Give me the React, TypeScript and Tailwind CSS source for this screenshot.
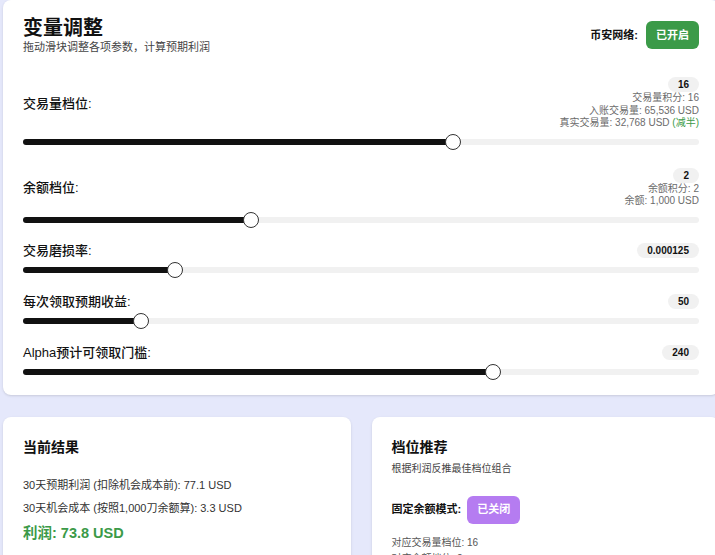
import React from "react";

type RowProps = {
  label: string;
  value: string;
  pct: number;
  extra?: React.ReactNode;
  className?: string;
};

function SliderRow({ label, value, pct, extra, className }: RowProps) {
  return (
    <div className={className}>
      <div className="flex items-center justify-between">
        <div className="text-[13px] font-medium leading-[15px] text-[#111]">{label}</div>
        <div className="flex flex-col items-end">
          <span className="h-[15px] rounded-full bg-[#f1f1f1] px-[10px] text-[10px] font-bold leading-[15px] text-[#111]">
            {value}
          </span>
          {extra && <div className="text-right text-[10px] leading-[12.5px] text-[#6b6b6b]">{extra}</div>}
        </div>
      </div>
      <div className="mt-1 flex h-4 items-center">
        <div className="relative h-[6px] w-full rounded-full bg-[#f1f1f1]">
          <div className="h-[6px] rounded-full bg-[#111]" style={{ width: `${pct}%` }} />
          <div
            className="absolute top-[-5px] h-4 w-4 -translate-x-1/2 rounded-full border-[1.5px] border-[#333] bg-white"
            style={{ left: `${pct}%` }}
          />
        </div>
      </div>
    </div>
  );
}

export default function App() {
  return (
    <div className="h-[555px] w-full overflow-hidden bg-[#e5e8fb] pl-[3px] font-['Liberation_Sans','Noto_Sans_CJK_SC',sans-serif] text-[#111]">
      <div className="w-[716px] rounded-lg bg-white px-5 pb-[15px] pt-4 shadow-sm">
        <div className="flex items-center justify-between">
          <div>
            <h1 className="text-[20px] font-bold leading-[24px] text-[#111]">变量调整</h1>
            <p className="text-[11px] leading-[14px] text-[#444]">拖动滑块调整各项参数，计算预期利润</p>
          </div>
          <div className="flex items-center gap-2">
            <span className="text-[11px] font-bold text-[#111]">币安网络:</span>
            <button className="h-[28px] rounded-md bg-[#3b9a48] px-[10px] text-[11px] font-bold text-white">
              已开启
            </button>
          </div>
        </div>

        <SliderRow
          className="mt-[23px]"
          label="交易量档位:"
          value="16"
          pct={63.66}
          extra={
            <>
              <div>交易量积分: 16</div>
              <div>入账交易量: 65,536 USD</div>
              <div>
                真实交易量: 32,768 USD <span className="text-[#3b9a48]">(减半)</span>
              </div>
            </>
          }
        />
        <SliderRow
          className="mt-[18px]"
          label="余额档位:"
          value="2"
          pct={33.68}
          extra={
            <>
              <div>余额积分: 2</div>
              <div>余额: 1,000 USD</div>
            </>
          }
        />
        <SliderRow className="mt-[15px]" label="交易磨损率:" value="0.000125" pct={22.55} />
        <SliderRow className="mt-4" label="每次领取预期收益:" value="50" pct={17.43} />
        <SliderRow className="mt-4" label="Alpha预计可领取门槛:" value="240" pct={69.6} />
      </div>

      <div className="mt-[22px] grid w-[716px] grid-cols-2 gap-[21px]">
        <div className="h-[200px] rounded-lg bg-white px-5 pt-5 shadow-sm">
          <h2 className="text-[14px] font-semibold leading-[20px] text-[#111]">当前结果</h2>
          <p className="mt-5 text-[11px] leading-[16px] text-[#333]">30天预期利润 (扣除机会成本前): 77.1 USD</p>
          <p className="mt-[7px] text-[11px] leading-[16px] text-[#333]">30天机会成本 (按照1,000刀余额算): 3.3 USD</p>
          <p className="mt-1.5 text-[14.5px] font-bold leading-[22px] text-[#3b9a48]">利润: 73.8 USD</p>
        </div>
        <div className="h-[200px] rounded-lg bg-white px-5 pt-5 shadow-sm">
          <h2 className="text-[14px] font-semibold leading-[20px] text-[#111]">档位推荐</h2>
          <p className="mt-[5px] text-[10px] leading-[14px] text-[#444]">根据利润反推最佳档位组合</p>
          <div className="mt-5 flex items-center gap-[6px]">
            <span className="text-[11px] font-bold text-[#111]">固定余额模式:</span>
            <button className="h-[28px] rounded-md bg-[#b57cf1] px-[10px] text-[11px] font-bold text-white">
              已关闭
            </button>
          </div>
          <p className="mt-3 text-[10px] leading-[14px] text-[#555]">对应交易量档位: 16</p>
          <p className="mt-[2px] text-[10px] leading-[14px] text-[#555]">对应余额档位: 2</p>
        </div>
      </div>
    </div>
  );
}
